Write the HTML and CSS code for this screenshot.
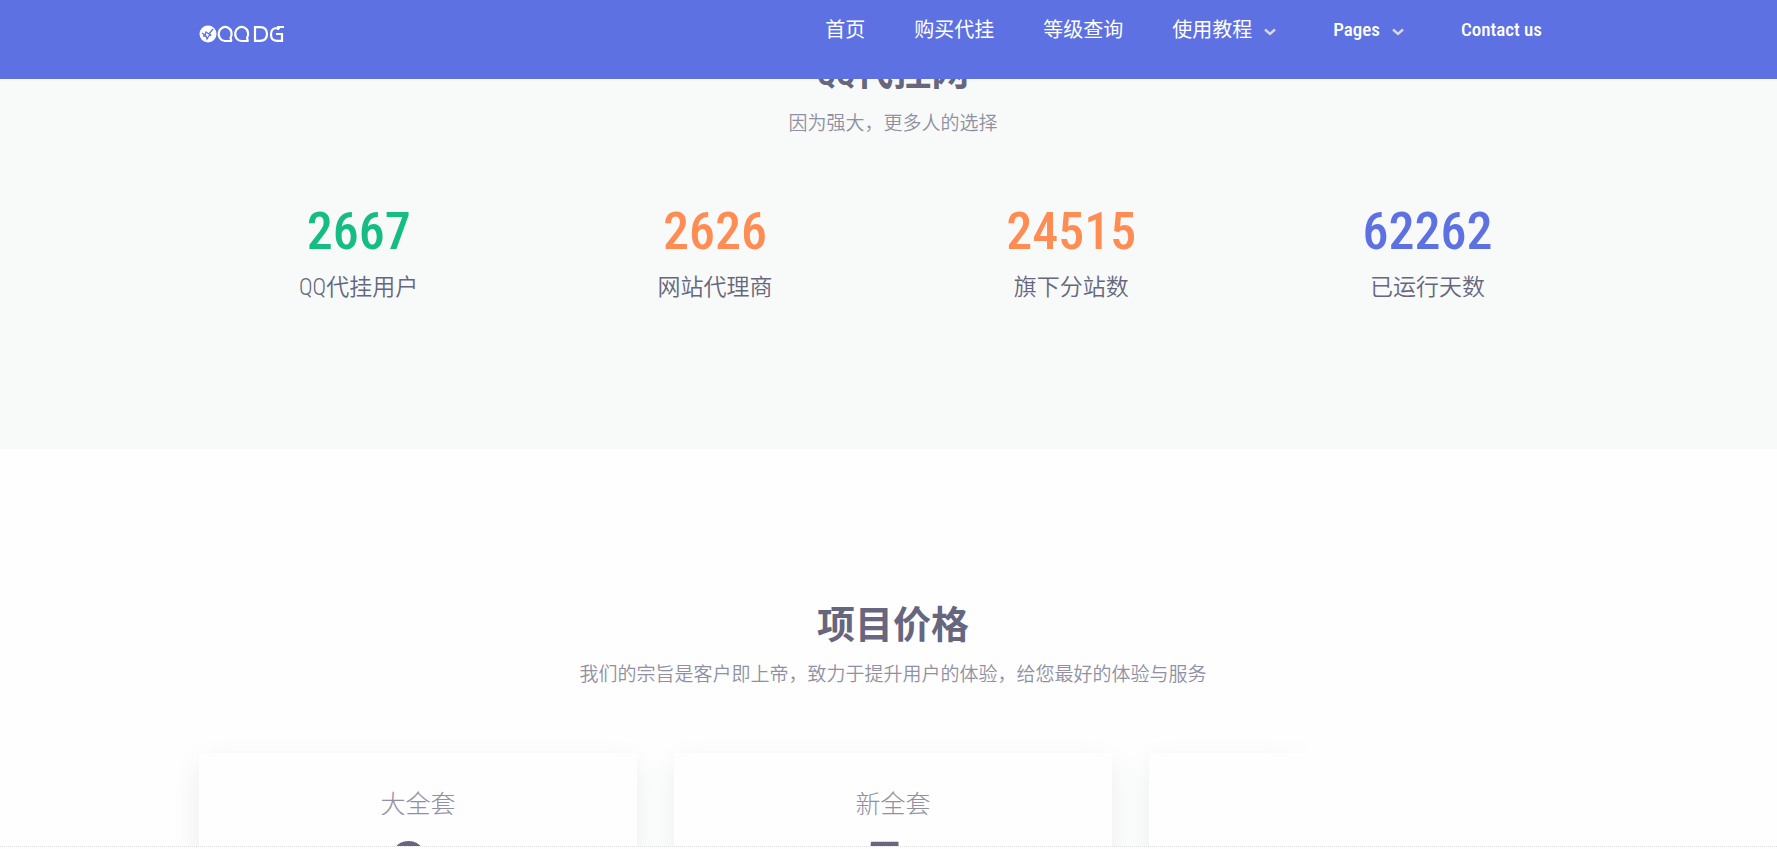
FILE: index.html
```html
<!DOCTYPE html>
<html lang="zh-CN">
  <head>
    <meta charset="utf-8">
    <title>QQ代挂网</title>
    <link rel="stylesheet" href="styles.css">
  </head>
  <body>
    <header class="header">
      <div class="container header-row">
        <a class="logo" href="#" aria-label="QQ DG">
          <svg width="86" height="18" viewBox="0 0 86 18" fill="none" stroke="#fff" stroke-width="2.200">
            <circle cx="9" cy="9" r="8.500" fill="#fff" stroke="none"/>
            <path d="M3 8l3 2 1-3 3 2 4-5M4 11l3 0 1 3 3-5 1 2" stroke="#5d71e3" stroke-width="1.300"/>
            <path d="M33 16h-7a6.500 7 0 1 1 5.500-3l1 3M49.500 16h-7a6.500 7 0 1 1 5.500-3l1 3"/>
            <path d="M56 2.200h5q7 0 7 6.800t-7 6.800h-5zM81 3h-3q-6 0-6 6.500t6 6.300h5V9h-6M79 1v4M80 2h5"/>
          </svg>
        </a>
        <nav class="nav">
          <a href="#">首页</a>
          <a href="#">购买代挂</a>
          <a href="#">等级查询</a>
          <a href="#" class="has-menu">使用教程
            <svg width="12" height="8" viewBox="0 0 12 8"><path d="M1 1.500l5 4.500 5-4.500" fill="none" stroke="#d8d8dc" stroke-width="2.400"/></svg>
          </a>
          <a href="#" class="has-menu latin">Pages
            <svg width="12" height="8" viewBox="0 0 12 8"><path d="M1 1.500l5 4.500 5-4.500" fill="none" stroke="#d8d8dc" stroke-width="2.400"/></svg>
          </a>
          <a href="#" class="latin">Contact us</a>
        </nav>
      </div>
    </header>

    <main class="main">
      <section class="section stats">
        <div class="container">
          <h2><span class="qq">QQ</span>代挂网</h2>
          <p class="subtitle">因为强大，更多人的选择</p>
          <div class="stats-row">
            <div class="stat">
              <div class="number green">2667</div>
              <div class="label">QQ代挂用户</div>
            </div>
            <div class="stat">
              <div class="number orange">2626</div>
              <div class="label">网站代理商</div>
            </div>
            <div class="stat">
              <div class="number orange">24515</div>
              <div class="label">旗下分站数</div>
            </div>
            <div class="stat">
              <div class="number blue">62262</div>
              <div class="label">已运行天数</div>
            </div>
          </div>
        </div>
      </section>

      <section class="section pricing">
        <div class="container">
          <h2>项目价格</h2>
          <p class="subtitle">我们的宗旨是客户即上帝，致力于提升用户的体验，给您最好的体验与服务</p>
          <div class="cards">
            <div class="card">
              <h3>大全套</h3>
              <div class="price">8<small>元</small></div>
            </div>
            <div class="card">
              <h3>新全套</h3>
              <div class="price">5<small>元</small></div>
            </div>
            <div class="card loading"></div>
          </div>
        </div>
      </section>
    </main>
  </body>
</html>
```
FILE: styles.css
```css
* {
  box-sizing: border-box;
}

body {
  display: flex;
  flex-direction: column;
  height: 100vh;
  margin: 0;
  overflow: hidden;
  background-color: #fefefe;
  color: #66667e;
  font-family: "Roboto Condensed", Roboto, "Noto Sans CJK SC", sans-serif;
}

h2, h3, p {
  margin: 0;
}

.container {
  max-width: 1388px;
  margin: 0 auto;
}

/* Header stays over the scrolled sections */
.header {
  position: fixed;
  top: 0;
  left: 0;
  right: 0;
  z-index: 10;
  height: 79px;
  padding: 16px 0 0 9px;
  background-color: #5d71e3;
}

.header-row {
  display: flex;
  align-items: center;
  justify-content: space-between;
}

.logo {
  display: flex;
  padding-top: 8px;
}

.nav {
  display: flex;
  gap: 49px;
  padding-right: 45px;
}

.nav a {
  color: #fff;
  font-size: 20px;
  line-height: 28px;
  text-decoration: none;
}

.nav .latin {
  font-size: 19px;
  font-weight: 500;
}

.nav .has-menu {
  display: flex;
  align-items: center;
  gap: 12px;
  padding-right: 8px;
}

.has-menu svg {
  margin-top: 4px;
}

.main {
  flex: 1;
  min-height: 0;
  margin-bottom: 2px;
  overflow: hidden;
  border-bottom: 1px dotted #ddd;
}

.section {
  padding-left: 9px;
  text-align: center;
}

.section h2 {
  font-size: 38px;
  line-height: 48px;
}

.qq {
  font-size: 32px;
}

.subtitle {
  margin-top: 13px;
  color: #9090a2;
  font-size: 19px;
  font-weight: 350;
  line-height: 26px;
}

.stats {
  padding-top: 48px;
  padding-bottom: 147px;
  background-color: #f8faf9;
}

.stats-row {
  display: grid;
  grid-template-columns: repeat(4, 1fr);
  gap: 37px;
  margin-top: 65px;
}

.number {
  font-size: 52px;
  font-weight: 500;
  line-height: 60px;
}

.green {
  color: #16bd83;
}

.orange {
  color: #ff8c53;
}

.blue {
  color: #5d71e3;
}

.label {
  margin-top: 12px;
  font-size: 23px;
  font-weight: 350;
  line-height: 28px;
}

.pricing {
  padding-top: 152px;
}

.cards {
  display: grid;
  grid-template-columns: repeat(3, 1fr);
  gap: 37px;
  margin-top: 65px;
}

.card {
  position: relative;
  height: 400px;
  padding-top: 37px;
  background-color: #fefefe;
  box-shadow: 0 10px 30px #eaf0ed;
}

.card h3 {
  color: #9090a2;
  font-size: 25px;
  font-weight: 300;
  line-height: 30px;
}

.price {
  margin-top: 6px;
  font-size: 80px;
  font-weight: bold;
  line-height: 90px;
}

.price small {
  font-size: 19px;
  font-weight: 300;
}

.loading::after {
  content: "";
  position: absolute;
  top: -40px;
  right: -50px;
  bottom: 0;
  left: 110px;
  background: linear-gradient(to right, transparent, #fefefe 60px);
}
```
